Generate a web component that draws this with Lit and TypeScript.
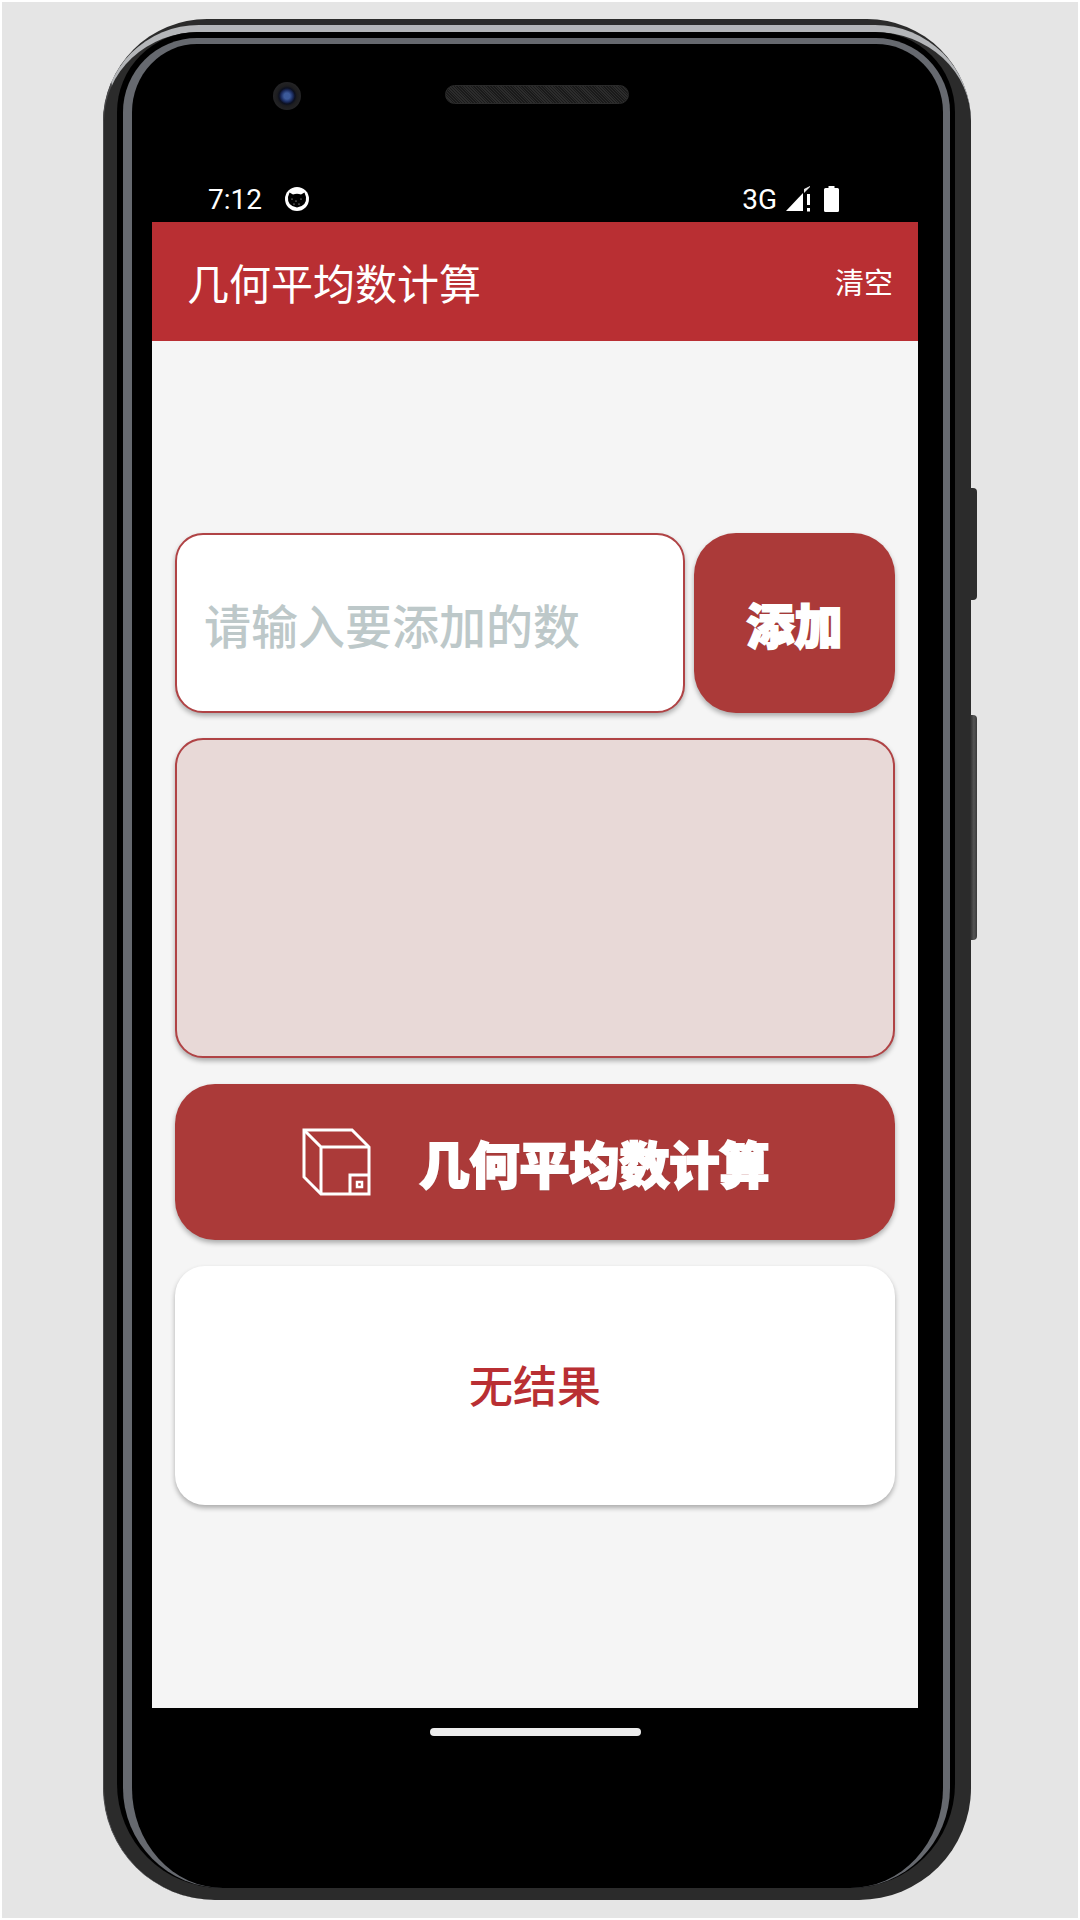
import { LitElement, html, css, svg } from "lit";
import { customElement } from "lit/decorators.js";

const CJK = `"Noto Sans CJK SC", "Noto Sans", sans-serif`;

@customElement("app-root")
export class AppRoot extends LitElement {
  static styles = css`
    :host { display: block; width: 1080px; height: 1920px; background: #fff; padding: 2px; box-sizing: border-box; overflow: hidden; }
    * { box-sizing: border-box; }
    .stage { height: 1916px; background: #e5e5e5; padding: 17px 0 0 101px; }
    .phone { position: relative; width: 868px; height: 1881px; background: #2b2b2b; padding-top: 6px; display: flex; flex-direction: column;
      border-radius: 104px 104px 124px 124px / 104px 104px 118px 118px; }
    .side { position: absolute; left: 100%; width: 7px; margin-left: -1px; border-radius: 0 4px 4px 0; }
    .side.power { top: 469px; height: 112px; background: #2e2e2e; }
    .side.volume { top: 696px; height: 225px; background: linear-gradient(to right, #2a2a2a, #555 55%, #3a3a3a); }
    .rim1 { flex: 1; display: flex; flex-direction: column; border-top: 7px solid #b4b6b9; border-left: 1px solid #4a4a4c; padding: 0 16px 12px 13px;
      background: #2b2b2b; border-radius: 96px 96px 112px 112px; }
    .rim2 { flex: 1; display: flex; flex-direction: column; background: #000; padding: 6px 5px 0 6px; border-radius: 80px 80px 104px 104px; }
    .rim3 { flex: 1; display: flex; flex-direction: column; background: #000; border-style: solid; border-color: #66696f; border-width: 6px 7px 0 9px;
      border-radius: 74px 74px 100px 100px; padding: 0 25px 0 20px; }
    .sensors { display: flex; align-items: center; height: 28px; margin-top: 38px; padding-left: 121px; }
    .camera { width: 28px; height: 28px; border-radius: 50%; background: radial-gradient(circle at 50% 50%, #3c5a9a 0 3px, #1a2a5c 6px, #0c1020 8px, #1d1d1f 10px, #242426 14px); }
    .speaker { width: 184px; height: 19px; margin: -3px 0 0 144px; border-radius: 10px; border: 1px solid #2a2a2a;
      background: repeating-linear-gradient(45deg, #2c2c2c 0 1px, #1a1a1a 1px 2px); }
    .status { display: flex; align-items: center; justify-content: space-between; height: 30px; margin-top: 74px; margin-bottom: 8px; padding: 0 79px 0 56px; color: #fff;
      font: 400 28px Roboto, sans-serif; }
    .status-left, .status-right { display: flex; align-items: center; }
    .cat { margin-left: 22px; display: block; }
    .signal { margin-left: 9px; display: block; }
    .battery { margin-left: 14px; display: block; }
    .screen { flex: 1; width: 766px; background: #f5f5f5; display: flex; flex-direction: column; font-family: ${css([CJK] as any)}; }
    .bar { height: 119px; background: #b92f33; color: #fff; display: flex; align-items: center; justify-content: space-between; padding: 0 25px 0 35px; }
    .title { font-size: 42px; line-height: 1; }
    .clear { font-size: 29px; line-height: 1; }
    .content { flex: 1; padding: 192px 23px 0; display: flex; flex-direction: column; gap: 26px; }
    .row { display: flex; gap: 9px; height: 180px; margin-bottom: -1px; }
    .input { flex: 1; background: #fff; border: 2px solid #b04345; border-radius: 28px; display: flex; align-items: center; padding-left: 27px;
      box-shadow: 0 3px 5px rgba(0,0,0,.3); color: #bdc8c9; font-size: 47px; font-weight: 500; }
    .fancy { color: #fff; font-weight: 900; -webkit-text-stroke: 2px #fff; text-shadow: 0 1px 1px rgba(70,70,70,.75); line-height: 1; }
    .add { width: 201px; background: #ab3a39; border-radius: 42px; display: flex; align-items: center; justify-content: center; box-shadow: 0 3px 5px rgba(0,0,0,.3); font-size: 48px; }
    .list { height: 320px; background: #e8d9d7; border: 2px solid #b04345; border-radius: 28px; box-shadow: 0 3px 5px rgba(0,0,0,.3); }
    .calc { height: 156px; background: #ab3a39; border-radius: 40px; display: flex; align-items: center; justify-content: center; gap: 49px; box-shadow: 0 3px 5px rgba(0,0,0,.3); font-size: 50px; }
    .calc svg { display: block; }
    .result { height: 239px; background: #fff; border-radius: 30px; display: flex; align-items: center; justify-content: center; box-shadow: 0 3px 5px rgba(0,0,0,.3);
      color: #b92f33; font-size: 44px; font-weight: 500; padding-bottom: 4px; }
    .nav { height: 180px; width: 766px; padding-top: 20px; display: flex; justify-content: center; }
    .pill { width: 211px; height: 8px; border-radius: 4px; background: #ececec; }
  `;

  render() {
    return html`
      <div class="stage">
        <div class="phone">
          <div class="side power"></div>
          <div class="side volume"></div>
          <div class="rim1"><div class="rim2"><div class="rim3">
            <div class="sensors"><div class="camera"></div><div class="speaker"></div></div>
            <div class="status">
              <div class="status-left">
                <span>7:12</span>
                <svg class="cat" width="26" height="26" viewBox="0 0 26 26">
                  <circle cx="13" cy="13" r="12" fill="#fff"/>
                  <path d="M4 11 L5.5 6.5 L9 8.5 Q13 7 17 8.5 L20.5 6.5 L22 11 Q23 20 13 21.5 Q3 20 4 11Z" fill="#000"/>
                  <g fill="#ddd"><circle cx="8" cy="13" r=".6"/><circle cx="12" cy="15" r=".6"/><circle cx="17" cy="13" r=".6"/><circle cx="10" cy="18" r=".6"/><circle cx="15" cy="18" r=".6"/></g>
                </svg>
              </div>
              <div class="status-right">
                <span>3G</span>
                <svg class="signal" width="24" height="26" viewBox="0 0 24 26">
                  <path d="M0 25 L17 7 V25 Z" fill="#fff"/>
                  <path d="M17 1 V7 L23 1Z" fill="#fff" opacity="0"/>
                  <path d="M18 3 L24 0 V1 L18 7Z" fill="#fff" opacity=".9"/>
                  <rect x="21" y="8" width="3" height="11" fill="#fff"/><rect x="21" y="22" width="3" height="3.5" fill="#fff"/>
                </svg>
                <svg class="battery" width="15" height="26" viewBox="0 0 15 26">
                  <path d="M4.5 0 H10.5 V2 H13.5 Q15 2 15 3.5 V24.5 Q15 26 13.5 26 H1.5 Q0 26 0 24.5 V3.5 Q0 2 1.5 2 H4.5Z" fill="#fff"/>
                </svg>
              </div>
            </div>
            <div class="screen">
              <div class="bar"><span class="title">几何平均数计算</span><span class="clear">清空</span></div>
              <div class="content">
                <div class="row">
                  <div class="input">请输入要添加的数</div>
                  <div class="add"><span class="fancy">添加</span></div>
                </div>
                <div class="list"></div>
                <div class="calc">
                  ${this.box()}
                  <span class="fancy">几何平均数计算</span>
                </div>
                <div class="result">无结果</div>
              </div>
            </div>
            <div class="nav"><div class="pill"></div></div>
          </div></div></div>
        </div>
      </div>
    `;
  }

  box() {
    return html`<svg width="70" height="70" viewBox="0 0 70 70" fill="none" stroke="#fff" stroke-width="3">
      ${svg`<path d="M3 3 H51 L68 20 V67 H20 L3 50 Z"/>
      <path d="M3 3 L20 20 H68 M20 20 V67"/>
      <path d="M49 67 V48 H68"/>
      <rect x="56" y="55" width="5" height="5" stroke-width="2.5"/>`}
    </svg>`;
  }
}
